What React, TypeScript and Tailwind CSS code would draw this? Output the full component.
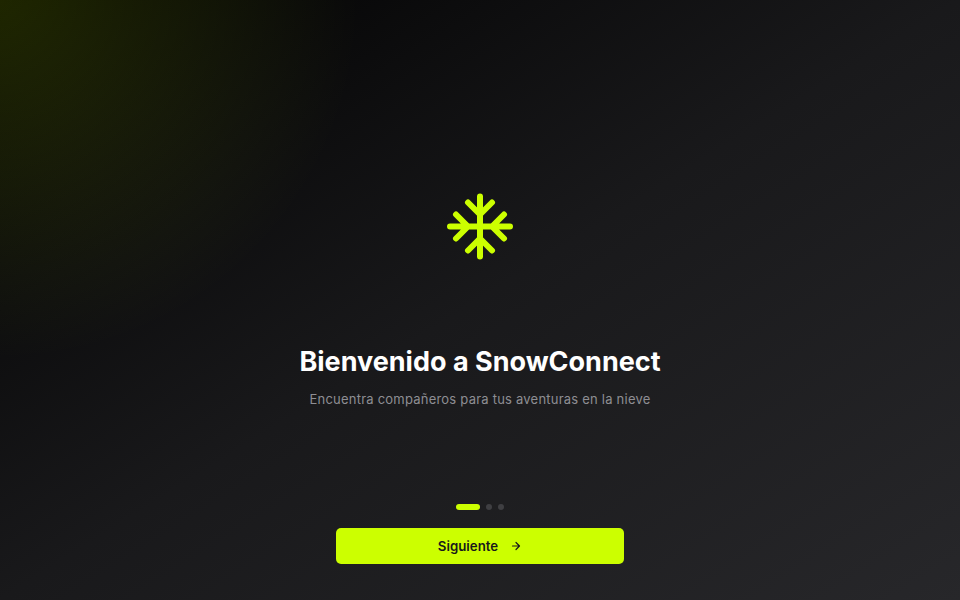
function FlakeIcon() {
  return (
    <svg className="size-[72px]" viewBox="0 -0.167 24 24" fill="none" stroke="#ccff00" strokeWidth="2" strokeLinecap="round" strokeLinejoin="round">
      <path d="M2 12h20M12 2v20M20 16l-4-4 4-4M4 8l4 4-4 4M16 4l-4 4-4-4M8 20l4-4 4 4" />
    </svg>
  );
}

export default function App() {
  return (
    <div className="relative flex h-[600px] w-full flex-col items-center overflow-hidden bg-[linear-gradient(to_bottom_right,#000_0%,#19191b_50%,#27272a_100%)] font-['Inter',sans-serif]">
      <div className="absolute inset-0 bg-[radial-gradient(circle_at_0_0,rgba(204,255,0,0.15),transparent_360px)]" />
      <main className="relative flex w-full flex-col items-center pt-[190px]">
        <FlakeIcon />
        <h1 className="mt-[82px] text-[27px] leading-[36px] font-bold text-white">Bienvenido a SnowConnect</h1>
        <p className="mt-2 text-[13px] leading-[22px] tracking-[0.22px] text-[#8e8e93]">Encuentra compañeros para tus aventuras en la nieve</p>
        <div className="mt-[94px] flex gap-1.5">
          <span className="h-1.5 w-6 rounded-full bg-[#ccff00]" />
          <span className="size-1.5 rounded-full bg-[#3f3f42]" />
          <span className="size-1.5 rounded-full bg-[#3f3f42]" />
        </div>
        <button className="mt-[18px] flex h-9 w-72 items-center justify-center gap-[12px] rounded-[5px] bg-[#ccff00] text-[13.25px] font-semibold text-[#18181b]">
          <span className="pt-px">Siguiente</span>
          <svg className="size-3" viewBox="0 0 24 24" fill="none" stroke="currentColor" strokeWidth="2.4" strokeLinecap="round" strokeLinejoin="round"><path d="M5 12h14M12 5l7 7-7 7" /></svg>
        </button>
      </main>
    </div>
  );
}
